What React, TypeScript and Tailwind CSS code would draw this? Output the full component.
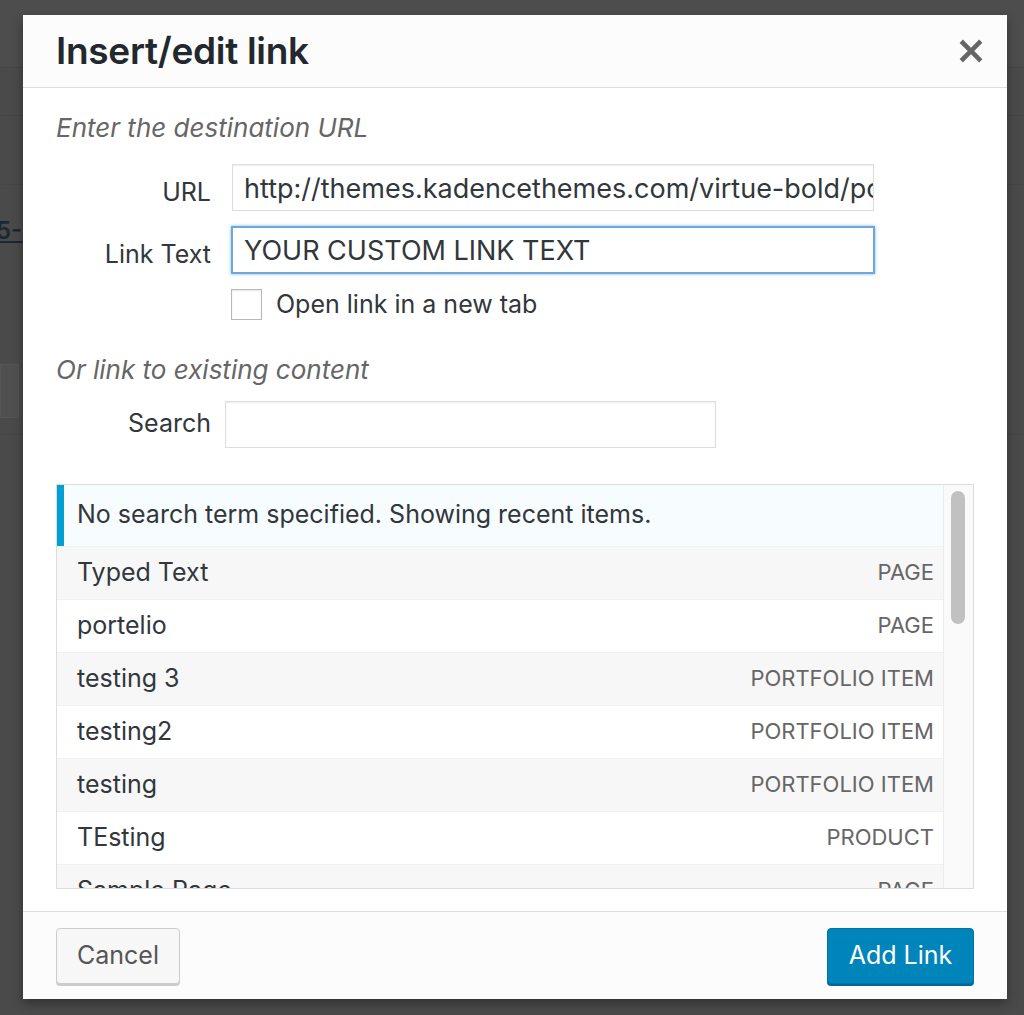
import { useState } from 'react'

type Item = { title: string; kind: string }

const recent: Item[] = [
  { title: 'Typed Text', kind: 'Page' },
  { title: 'portelio', kind: 'Page' },
  { title: 'testing 3', kind: 'Portfolio Item' },
  { title: 'testing2', kind: 'Portfolio Item' },
  { title: 'testing', kind: 'Portfolio Item' },
  { title: 'TEsting', kind: 'Product' },
  { title: 'Sample Page', kind: 'Page' },
]

const font = { fontFamily: 'Inter, "Liberation Sans", Arial, sans-serif' }

function CloseIcon() {
  return (
    <svg viewBox="0 0 20 20" width="46" height="46" fill="#666" aria-hidden>
      <path d="M14.95 6.46L11.41 10l3.54 3.54-1.41 1.41L10 11.42l-3.53 3.53-1.42-1.42L8.58 10 5.05 6.47l1.42-1.42L10 8.58l3.54-3.53z" />
    </svg>
  )
}

function FieldRow({ label, gap, children }: { label: string; gap: string; children: React.ReactNode }) {
  return (
    <div className="flex items-center">
      <label className={`w-[155px] flex-none text-right text-[25px] text-[#32373c] ${gap}`}>{label}</label>
      {children}
    </div>
  )
}

function ResultRow({ item, odd }: { item: Item; odd: boolean }) {
  return (
    <li
      className={`flex h-[53px] items-center justify-between border-t border-[#f1f1f1] pl-[20px] pr-[9px] ${
        odd ? 'bg-[#f7f7f7]' : 'bg-white'
      }`}
    >
      <span className="text-[25px] text-[#32373c]">{item.title}</span>
      <span className="text-[22px] uppercase text-[#666]">{item.kind}</span>
    </li>
  )
}

export default function App() {
  const [newTab, setNewTab] = useState(false)

  return (
    <div className="relative h-[1015px] w-[1024px] overflow-hidden bg-[#4a4a4a]" style={font}>
      {/* dimmed editor page behind the overlay */}
      <div className="flex h-full flex-col">
        <div className="h-[68px] border-b border-[#444] bg-[#4d4d4d]" />
        <div className="h-[48px] border-b border-[#454545]" />
        <div className="h-[69px] border-b border-[#464646]" />
        <div className="flex h-[175px] items-start pt-[28px]">
          <span className="-ml-[4px] text-[24px] font-semibold text-[#1d2833] underline">5-</span>
        </div>
        <div className="h-[75px] border-b border-[#464646]">
          <div className="mt-[4px] h-[54px] w-[19px] border border-[#555] bg-[#505050]" />
        </div>
      </div>

      <div className="absolute left-[23px] top-[15px] flex h-[984px] w-[984px] flex-col bg-white shadow-[0_4px_10px_rgba(0,0,0,0.35)]">
        <header className="flex h-[73px] flex-none items-center justify-between border-b border-[#ddd] bg-[#fcfcfc] pl-[33px] pr-[13px]">
          <h1 className="text-[37px] font-semibold tracking-[-0.3px] text-[#23282d]">Insert/edit link</h1>
          <button className="grid h-[46px] w-[46px] place-items-center">
            <CloseIcon />
          </button>
        </header>

        <div className="flex min-h-0 flex-1 flex-col px-[33px] pt-[25px]">
          <p className="text-[26px] italic leading-[30px] text-[#666]">Enter the destination URL</p>

          <div className="mt-[21px] flex flex-col gap-[14px]">
            <FieldRow label="URL" gap="mr-[21px] pt-[10px]">
              <div className="h-[47px] w-[642px] overflow-hidden border border-[#ddd] bg-white pl-[11px] shadow-[inset_0_1px_2px_rgba(0,0,0,0.07)]">
                <span className="whitespace-nowrap text-[27px] leading-[47px] text-[#32373c]">
                  http://themes.kadencethemes.com/virtue-bold/portfolio/typed-text/
                </span>
              </div>
            </FieldRow>
            <FieldRow label="Link Text" gap="mr-[20px] pt-[10px]">
              <div className="h-[48px] w-[644px] border-2 border-[#6fa6dc] bg-white pl-[11px] shadow-[0_0_3px_rgba(30,140,190,0.6)]">
                <span className="whitespace-nowrap text-[27px] leading-[46px] text-[#32373c]">YOUR CUSTOM LINK TEXT</span>
              </div>
            </FieldRow>
          </div>

          <label className="ml-[175px] mt-[15px] flex h-[31px] items-center gap-[14px]">
            <span
              onClick={() => setNewTab(!newTab)}
              className="h-[31px] w-[31px] border border-[#b4b9be] bg-white shadow-[inset_0_1px_2px_rgba(0,0,0,0.1)]"
            />
            <span className="text-[25px] leading-[30px] text-[#32373c]">Open link in a new tab</span>
          </label>

          <p className="mt-[35px] text-[26px] italic leading-[30px] text-[#666]">Or link to existing content</p>

          <div className="mt-[16px]">
            <FieldRow label="Search" gap="mr-[14px]">
              <div className="h-[47px] w-[491px] border border-[#ddd] bg-white shadow-[inset_0_1px_2px_rgba(0,0,0,0.07)]" />
            </FieldRow>
          </div>

          <div className="mt-[36px] flex h-[405px] border border-[#ddd] bg-white">
            <div className="min-w-0 flex-1 overflow-hidden">
              <div className="flex h-[61px] items-center border-l-[7px] border-[#00a0d2] bg-[#f7fcfe] pl-[13px]">
                <span className="text-[25px] text-[#32373c]">No search term specified. Showing recent items.</span>
              </div>
              <ul>
                {recent.map((item, i) => (
                  <ResultRow key={item.title} item={item} odd={i % 2 === 0} />
                ))}
              </ul>
            </div>
            <div className="w-[30px] flex-none border-l border-[#ececec] bg-[#fafafa] pl-[7px] pt-[6px]">
              <div className="h-[133px] w-[14px] rounded-full bg-[#c1c1c1]" />
            </div>
          </div>
        </div>

        <footer className="flex h-[88px] flex-none items-center justify-between border-t border-[#ddd] bg-[#fcfcfc] px-[33px]">
          <button className="h-[56px] w-[124px] rounded-[4px] border border-[#ccc] bg-[#f7f7f7] text-[25px] text-[#555] shadow-[0_2px_0_#ccc]">
            Cancel
          </button>
          <button className="h-[56px] w-[147px] rounded-[4px] border border-[#0073aa] bg-[#0085ba] text-[25px] text-white shadow-[0_2px_0_#006799]">
            Add Link
          </button>
        </footer>
      </div>
    </div>
  )
}
